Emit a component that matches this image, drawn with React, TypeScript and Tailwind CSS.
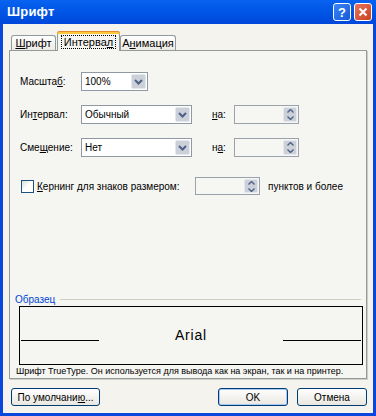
import React from "react";

const Chevron = () => (
  <svg width="9" height="6" viewBox="0 0 9 6">
    <path d="M1 1 L4.5 4.5 L8 1" fill="none" stroke="#4D6185" strokeWidth="2" />
  </svg>
);

const Combo = ({ value, width }: { value: string; width: string }) => (
  <div className={`${width} h-[19px] flex border border-[#8F99A4] bg-white`}>
    <div className="flex-1 flex items-center pl-[3px]">{value}</div>
    <div className="w-[15px] m-px rounded-[2px] bg-[#CBD0D9] border border-[#E4E7EC] flex items-center justify-center">
      <Chevron />
    </div>
  </div>
);

const Spin = ({ width, height }: { width: string; height: string }) => (
  <div className={`${width} ${height} shrink-0 flex border border-[#9AA2AC] bg-[#F6F6F2]`}>
    <div className="flex-1" />
    <div className="w-[14px] m-px rounded-[2px] bg-[#CBD0D9] border border-[#E4E7EC] flex flex-col items-center justify-center gap-[3px]">
      <svg width="7" height="4" viewBox="0 0 7 4">
        <path d="M0.5 3.5 L3.5 0.5 L6.5 3.5" fill="none" stroke="#4D6185" strokeWidth="1.4" />
      </svg>
      <svg width="7" height="4" viewBox="0 0 7 4">
        <path d="M0.5 0.5 L3.5 3.5 L6.5 0.5" fill="none" stroke="#4D6185" strokeWidth="1.4" />
      </svg>
    </div>
  </div>
);

const Btn = ({ children, width, def }: { children: React.ReactNode; width: string; def?: boolean }) => (
  <div
    className={`${width} h-[18px] rounded-[3px] border border-[#003C74] bg-gradient-to-b from-white to-[#E8E7E0] flex items-center justify-center ${
      def ? "shadow-[inset_0_0_0_1px_#A8C8F8]" : ""
    }`}
  >
    {children}
  </div>
);

export default function App() {
  return (
    <div className="w-[376px] h-[416px] flex flex-col bg-[#0A47DC] font-['Liberation_Sans',Arial,sans-serif] text-[10px] text-black">
      {/* title bar */}
      <div className="h-[24px] flex items-center pl-[7px] pr-[4px] bg-gradient-to-b from-[#0A62F0] via-[#0055E5] to-[#0047DA]">
        <div className="flex-1 text-white font-bold text-[13px] tracking-[0.2px]">Шрифт</div>
        <div className="flex gap-[3px]">
          <div className="w-[18px] h-[18px] rounded-[3px] border border-white bg-gradient-to-br from-[#3C86F6] to-[#1458D8] flex items-center justify-center text-white font-bold text-[13px] leading-none">
            ?
          </div>
          <div className="w-[18px] h-[18px] rounded-[3px] border border-white bg-gradient-to-br from-[#E8745A] to-[#C8401E] flex items-center justify-center">
            <svg width="10" height="10" viewBox="0 0 10 10">
              <path d="M1.5 1.5 L8.5 8.5 M8.5 1.5 L1.5 8.5" stroke="white" strokeWidth="2" />
            </svg>
          </div>
        </div>
      </div>

      {/* client */}
      <div className="flex-1 mx-[3px] mb-[3px] bg-[#F4F3EE] flex flex-col px-[6px] pt-[7px] pb-[7px]">
        {/* tabs */}
        <div className="h-[19px] flex items-end pl-[2px] text-[11px]">
          <div className="w-[45px] h-[15px] mr-px rounded-t-[3px] border border-b-0 border-[#919B9C] bg-gradient-to-b from-white to-[#ECEBE6] flex items-center justify-center">
            <span><span className="underline">Ш</span>рифт</span>
          </div>
          <div className="relative z-10 w-[63px] h-[20px] -mb-px rounded-t-[3px] border border-b-0 border-[#919B9C] bg-[#F5F5F1] flex flex-col">
            <div className="h-[3px] -mx-px -mt-px rounded-t-[3px] bg-[#FFC73C] border-t border-[#E68B2C]" />
            <div className="flex-1 flex items-center justify-center pb-[1px]">
              <span className="border border-dotted border-black px-[2px] leading-[12px]">
                Интерва<span className="underline">л</span>
              </span>
            </div>
          </div>
          <div className="w-[56px] h-[15px] rounded-t-[3px] border border-b-0 border-[#919B9C] bg-gradient-to-b from-white to-[#ECEBE6] flex items-center justify-center">
            <span>А<span className="underline">н</span>имация</span>
          </div>
        </div>

        {/* panel */}
        <div className="flex-1 border border-[#919B9C] bg-[#F5F5F1] shadow-[1px_1px_0_#D0CEC2] flex flex-col">
          <div className="mt-[21px] h-[19px] flex items-center pl-[10px]">
            <div className="w-[61px]">
              Масшта<span className="underline">б</span>:
            </div>
            <Combo value="100%" width="w-[67px]" />
          </div>

          <div className="mt-[14px] h-[19px] flex items-center pl-[10px]">
            <div className="w-[61px]">
              Ин<span className="underline">т</span>ервал:
            </div>
            <Combo value="Обычный" width="w-[111px]" />
            <div className="ml-[20px] w-[22px]">
              <span className="underline">н</span>а:
            </div>
            <Spin width="w-[65px]" height="h-[19px]" />
          </div>

          <div className="mt-[14px] h-[19px] flex items-center pl-[10px]">
            <div className="w-[61px]">
              Сме<span className="underline">щ</span>ение:
            </div>
            <Combo value="Нет" width="w-[111px]" />
            <div className="ml-[20px] w-[22px]">
              н<span className="underline">а</span>:
            </div>
            <Spin width="w-[65px]" height="h-[19px]" />
          </div>

          <div className="mt-[20px] h-[18px] flex items-center pl-[11px]">
            <div className="w-[13px] h-[13px] shrink-0 border border-[#1C5180] bg-gradient-to-br from-[#DCDCD7] via-white to-white" />
            <div className="ml-[3px] w-[158px] whitespace-nowrap">
              <span className="underline">К</span>ернинг для знаков размером:
            </div>
            <Spin width="w-[65px]" height="h-[18px]" />
            <div className="ml-[8px] whitespace-nowrap">пунктов и более</div>
          </div>

          <div className="flex-1" />

          <div className="h-[12px] flex items-center pl-[5px] pr-[5px]">
            <span className="text-[#0046D5]">Образец</span>
            <div className="flex-1 ml-[5px] h-px bg-[#D0D0BF]" />
          </div>
          <div className="mt-px ml-[9px] mr-[3px] h-[59px] shrink-0 border border-black pt-[22px] flex flex-col">
            <div className="h-[12px] flex items-end">
              <div className="ml-px w-[78px] h-px bg-black" />
              <div className="flex-1 text-center text-[14px] leading-[14px] tracking-[0.8px] -mb-[1px]">Arial</div>
              <div className="mr-px w-[78px] h-px bg-black" />
            </div>
          </div>
          <div className="h-[13px] flex items-center pl-[6px] whitespace-nowrap text-[9px]">
            Шрифт TrueType. Он используется для вывода как на экран, так и на принтер.
          </div>
        </div>

        {/* buttons */}
        <div className="mt-[9px] h-[18px] flex items-center pl-[2px]">
          <Btn width="w-[89px]">
            <span>По умолчани<span className="underline">ю</span>...</span>
          </Btn>
          <div className="flex-1" />
          <Btn width="w-[70px]" def>
            OK
          </Btn>
          <div className="w-[9px]" />
          <Btn width="w-[70px]">Отмена</Btn>
        </div>
      </div>
    </div>
  );
}
